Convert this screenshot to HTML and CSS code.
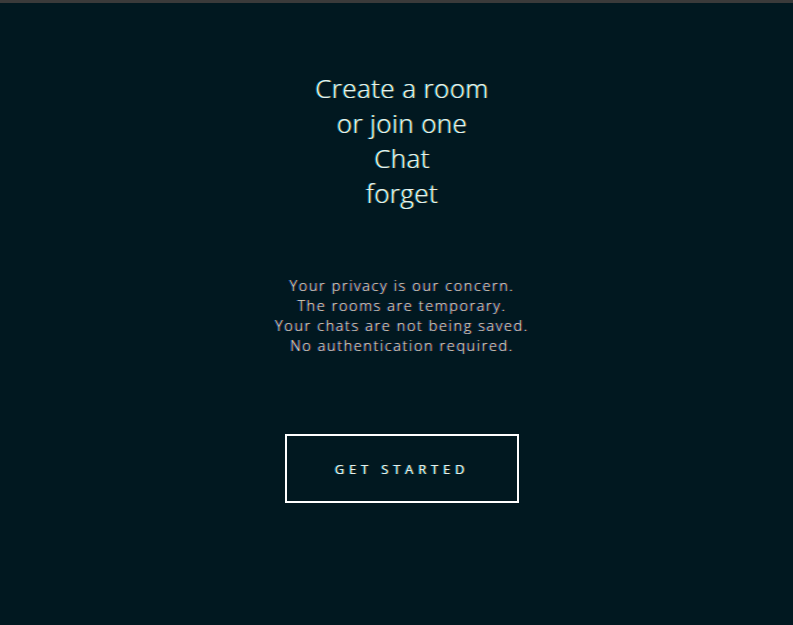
FILE: index.html
```html
<!DOCTYPE html>
<html>
<head>
<meta charset="utf-8">
<link rel="stylesheet" href="styles.css">
</head>
<body>
<div class="topbar"></div>
<main class="hero">
  <h1 class="title">
    <span>Create a room</span>
    <span>or join one</span>
    <span>Chat</span>
    <span>forget</span>
  </h1>
  <p class="info">
    <span>Your privacy is our concern.</span>
    <span>The rooms are temporary.</span>
    <span>Your chats are not being saved.</span>
    <span>No authentication required.</span>
  </p>
  <button class="cta">GET STARTED</button>
</main>
</body>
</html>
```
FILE: styles.css
```css
html, body {
  margin: 0;
  padding: 0;
  height: 100%;
  background: #011820;
}
body {
  font-family: "Open Sans", "DejaVu Sans", sans-serif;
  overflow: hidden;
}
.topbar {
  height: 3px;
  background: #3a3a3a;
}
.hero {
  display: flex;
  flex-direction: column;
  align-items: center;
  padding: 68px 0 0 11px;
}
.title {
  margin: 0;
  display: flex;
  flex-direction: column;
  align-items: center;
  font-weight: 300;
  font-size: 26px;
  line-height: 35px;
  letter-spacing: 0.4px;
  color: #e8f0ee;
  text-shadow: -1px 0 rgba(0, 200, 255, 0.55), 1px 0 rgba(255, 200, 40, 0.45);
}
.info {
  margin: 65px 0 0;
  display: flex;
  flex-direction: column;
  align-items: center;
  font-weight: 300;
  font-size: 14.5px;
  line-height: 20px;
  letter-spacing: 1.6px;
  color: #d6d2b8;
  text-shadow: -1px 0 rgba(60, 120, 255, 0.6), 1px 0 rgba(255, 80, 60, 0.45);
}
.cta {
  margin-top: 78px;
  width: 234px;
  height: 69px;
  background: transparent;
  border: 2px solid #ffffff;
  color: #e4eef0;
  font-family: "Open Sans", "DejaVu Sans", sans-serif;
  font-weight: 500;
  font-size: 13px;
  letter-spacing: 4.8px;
  padding: 0;
  text-shadow: -1px 0 rgba(0, 200, 255, 0.5), 1px 0 rgba(255, 200, 60, 0.4);
}
```
